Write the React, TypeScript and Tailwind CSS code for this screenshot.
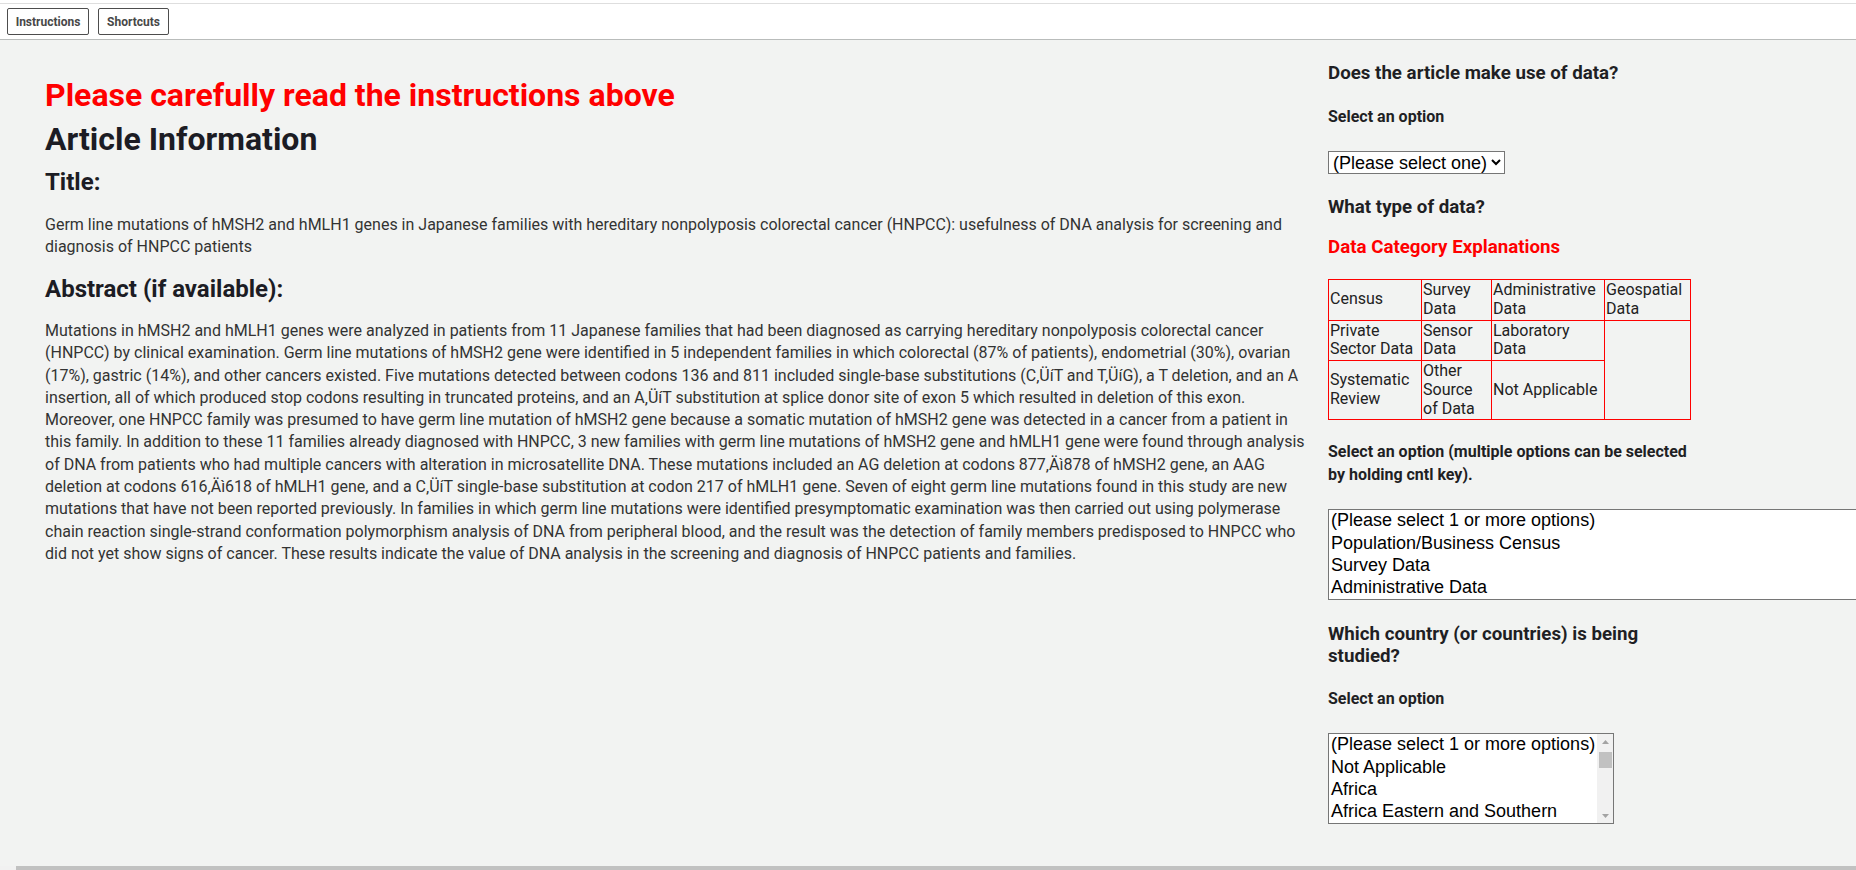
import React from 'react';

const abstractText =
  'Mutations in hMSH2 and hMLH1 genes were analyzed in patients from 11 Japanese families that had been diagnosed as carrying hereditary nonpolyposis colorectal cancer (HNPCC) by clinical examination. Germ line mutations of hMSH2 gene were identified in 5 independent families in which colorectal (87% of patients), endometrial (30%), ovarian (17%), gastric (14%), and other cancers existed. Five mutations detected between codons 136 and 811 included single-base substitutions (C\u201AÜíT and T\u201AÜíG), a T deletion, and an A insertion, all of which produced stop codons resulting in truncated proteins, and an A\u201AÜíT substitution at splice donor site of exon 5 which resulted in deletion of this exon. Moreover, one HNPCC family was presumed to have germ line mutation of hMSH2 gene because a somatic mutation of hMSH2 gene was detected in a cancer from a patient in this family. In addition to these 11 families already diagnosed with HNPCC, 3 new families with germ line mutations of hMSH2 gene and hMLH1 gene were found through analysis of DNA from patients who had multiple cancers with alteration in microsatellite DNA. These mutations included an AG deletion at codons 877\u201AÄì878 of hMSH2 gene, an AAG deletion at codons 616\u201AÄì618 of hMLH1 gene, and a C\u201AÜíT single-base substitution at codon 217 of hMLH1 gene. Seven of eight germ line mutations found in this study are new mutations that have not been reported previously. In families in which germ line mutations were identified presymptomatic examination was then carried out using polymerase chain reaction single-strand conformation polymorphism analysis of DNA from peripheral blood, and the result was the detection of family members predisposed to HNPCC who did not yet show signs of cancer. These results indicate the value of DNA analysis in the screening and diagnosis of HNPCC patients and families.';

// only the rows visible in the 4-row list boxes
const dataTypes = ['(Please select 1 or more options)', 'Population/Business Census', 'Survey Data', 'Administrative Data'];

const countries = ['(Please select 1 or more options)', 'Not Applicable', 'Africa', 'Africa Eastern and Southern'];

function Arrow({ up }: { up?: boolean }) {
  return (
    <svg width="7" height="4" viewBox="0 0 7 4">
      <path d={up ? 'M0 4 L3.5 0 L7 4 Z' : 'M0 0 L3.5 4 L7 0 Z'} fill="#a3a3a3" />
    </svg>
  );
}

function ListBox({ options, scroll, className }: { options: string[]; scroll?: boolean; className: string }) {
  return (
    <div className={`flex h-[91px] overflow-hidden border border-[#767676] bg-white font-['Liberation_Sans',Arial,sans-serif] text-[18px] text-black ${className}`}>
      <div className="flex-1">
        {options.map((o) => (
          <div key={o} className="whitespace-nowrap px-[2px] pb-px leading-[21.4px]">
            {o}
          </div>
        ))}
      </div>
      {scroll && (
        <div className="flex w-[16px] shrink-0 flex-col bg-[#f1f1f1]">
          <div className="flex h-[15px] items-center justify-center">
            <Arrow up />
          </div>
          <div className="mx-[1.5px] mt-[3px] h-[16px] bg-[#c1c1c1]" />
          <div className="flex-1" />
          <div className="flex h-[15px] items-center justify-center">
            <Arrow />
          </div>
        </div>
      )}
    </div>
  );
}

export default function App() {
  return (
    <div className="flex h-screen flex-col overflow-hidden bg-[#f2f3f2] font-['Roboto',sans-serif]">
      {/* top bar */}
      <header className="bg-white pt-[3px]">
        <div className="flex gap-[9px] border-t border-b border-t-[#dedede] border-b-[#b9bcbb] py-[4px] pl-[7px]">
          <button className="h-[27px] w-[82px] rounded-[2px] border border-[#4d4d4d] bg-white text-[12px] font-bold text-[#474747]">
            Instructions
          </button>
          <button className="h-[27px] w-[71px] rounded-[2px] border border-[#4d4d4d] bg-white text-[12px] font-bold text-[#474747]">
            Shortcuts
          </button>
        </div>
      </header>

      <main className="flex min-h-0 flex-1">
        {/* article */}
        <div className="w-[1308px] shrink-0 pl-[45px]">
          <h1 className="mt-[36px] text-[32px] leading-[38px] font-bold text-[#ff0000]">
            Please carefully read the instructions above
          </h1>
          <h1 className="mt-[6px] text-[32px] leading-[38px] font-bold text-[#1c1c24]">Article Information</h1>
          <h2 className="mt-[10px] text-[24px] leading-[28px] font-bold text-[#1c1c24]">Title:</h2>
          <p className="mt-[18px] text-[16px] leading-[22px] text-[#333]">
            Germ line mutations of hMSH2 and hMLH1 genes in Japanese families with hereditary nonpolyposis colorectal
            cancer (HNPCC): usefulness of DNA analysis for screening and diagnosis of HNPCC patients
          </p>
          <h2 className="mt-[17px] text-[24px] leading-[28px] font-bold text-[#1c1c24]">Abstract (if available):</h2>
          <p className="mt-[17px] text-[16px] leading-[22.3px] text-[#333]">{abstractText}</p>
        </div>

        {/* questions */}
        <div className="ml-[20px] flex w-[372px] shrink-0 flex-col pt-[22px] text-[#1f1f24]">
          <h3 className="text-[18.72px] leading-[22px] font-bold">Does the article make use of data?</h3>
          <p className="mt-[22px] text-[16px] leading-[22px] font-bold">Select an option</p>
          <select className="mt-[23px] h-[23px] w-[177px] border border-[#767676] bg-white font-['Liberation_Sans',Arial,sans-serif] text-[18px] text-black">
            <option>(Please select one)</option>
            <option>Yes</option>
            <option>No</option>
          </select>
          <h3 className="mt-[22px] text-[18.72px] leading-[22px] font-bold">What type of data?</h3>
          <h3 className="mt-[18px] text-[18.72px] leading-[22px] font-bold text-[#ff0000]">Data Category Explanations</h3>

          <table className="mt-[21px] w-[362px] table-fixed border-collapse text-[16px] leading-[18.75px] text-[#222]">
            <colgroup>
              <col className="w-[93px]" />
              <col className="w-[70px]" />
              <col className="w-[113px]" />
              <col className="w-[86px]" />
            </colgroup>
            <tbody>
              <tr>
                <td className="border border-[#ff0000] p-px">Census</td>
                <td className="border border-[#ff0000] p-px">Survey Data</td>
                <td className="border border-[#ff0000] p-px">Administrative Data</td>
                <td className="border border-[#ff0000] p-px">Geospatial Data</td>
              </tr>
              <tr>
                <td className="border border-[#ff0000] p-px">Private Sector Data</td>
                <td className="border border-[#ff0000] p-px">Sensor Data</td>
                <td className="border border-[#ff0000] p-px">Laboratory Data</td>
                <td rowSpan={2} className="border border-[#ff0000] p-px"></td>
              </tr>
              <tr>
                <td className="border border-[#ff0000] p-px">Systematic Review</td>
                <td className="border border-[#ff0000] p-px">Other Source of Data</td>
                <td className="border border-[#ff0000] p-px whitespace-nowrap">Not Applicable</td>
              </tr>
            </tbody>
          </table>

          <p className="mt-[21px] text-[16px] leading-[22.5px] font-bold">
            Select an option (multiple options can be selected by holding cntl key).
          </p>
          <ListBox options={dataTypes} className="mt-[23px] w-[640px] shrink-0" />

          <h3 className="mt-[23px] text-[18.72px] leading-[22px] font-bold">
            Which country (or countries) is being studied?
          </h3>
          <p className="mt-[21px] text-[16px] leading-[22px] font-bold">Select an option</p>
          <ListBox options={countries} scroll className="mt-[23px] w-[286px]" />
        </div>
      </main>

      {/* window scrollbar */}
      <div className="flex h-[4px] shrink-0 bg-[#f1f1f1]">
        <div className="ml-[16px] flex-1 bg-[#c1c1c1]" />
      </div>
    </div>
  );
}
